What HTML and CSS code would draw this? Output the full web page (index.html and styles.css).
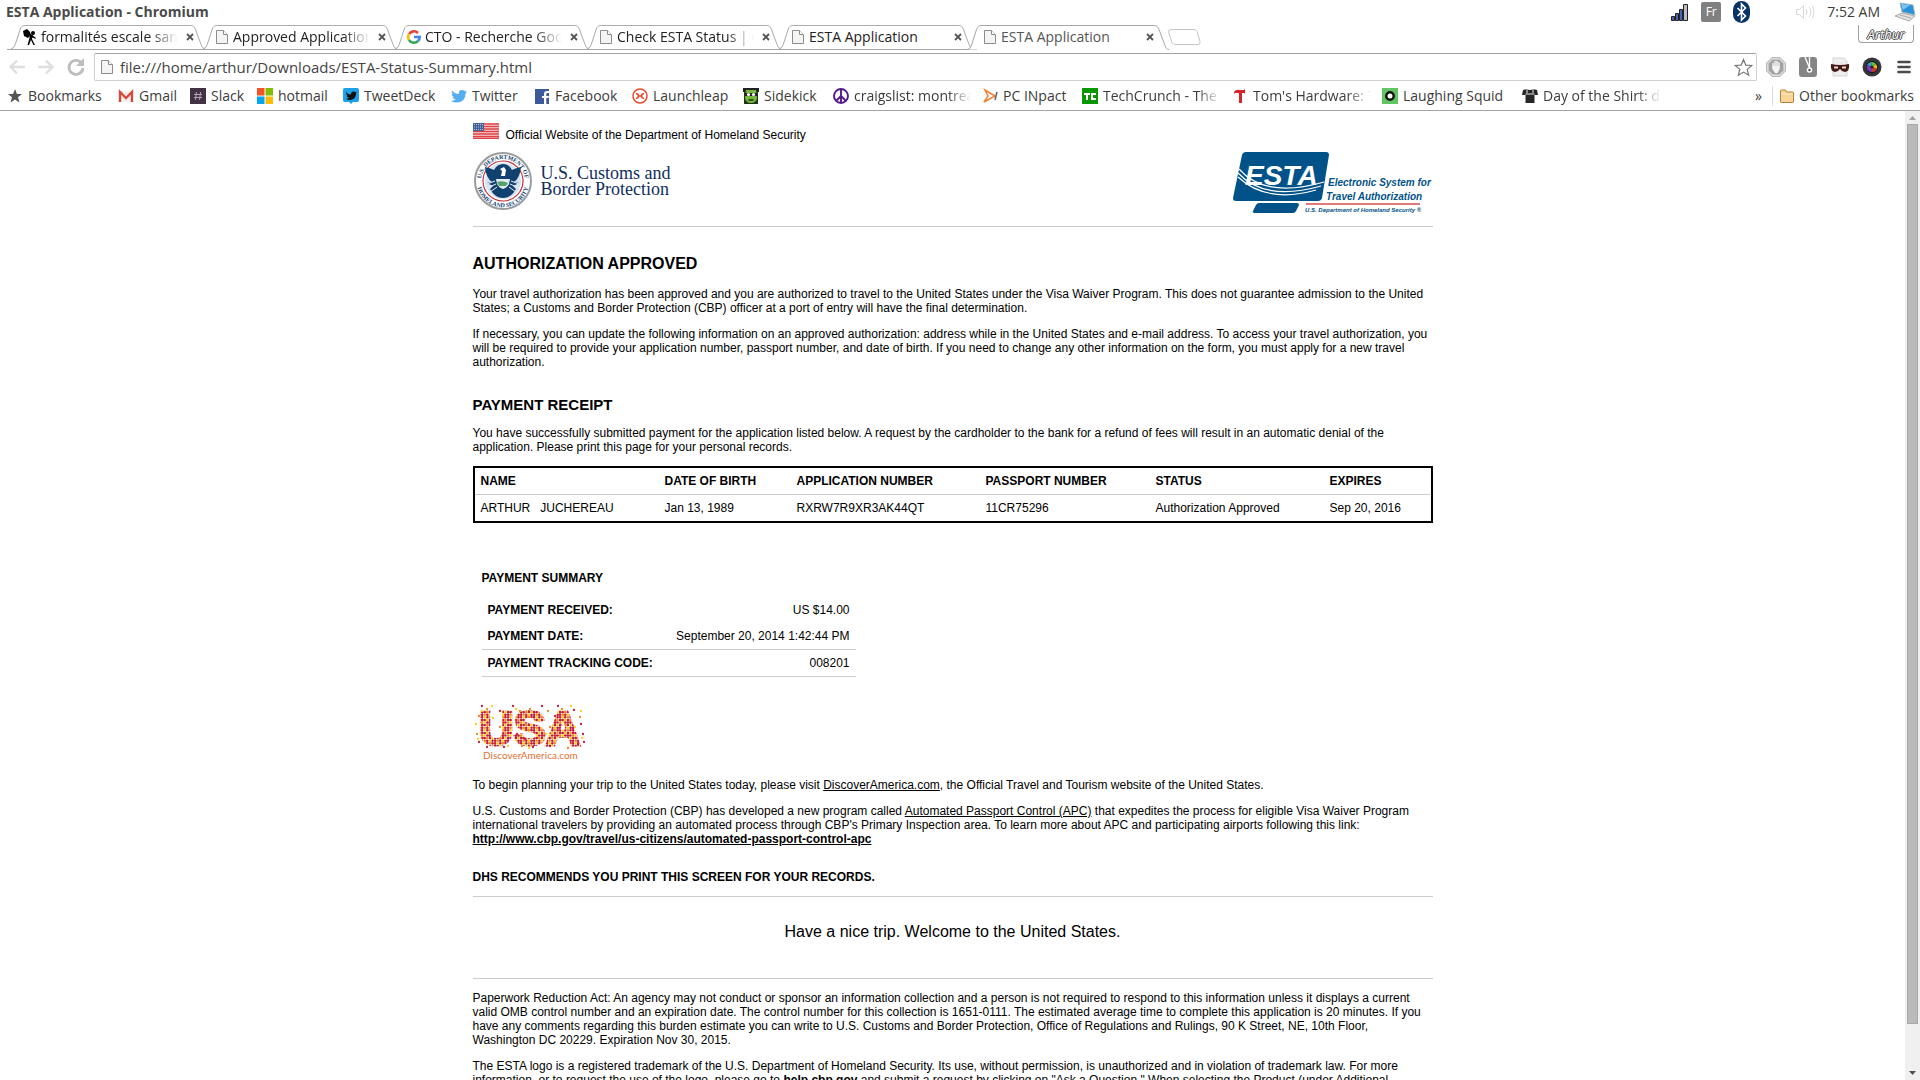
FILE: index.html
```html
<!DOCTYPE html>
<html lang="en">
<head>
<meta charset="utf-8">
<title>ESTA Application - Chromium</title>
<link rel="stylesheet" href="styles.css">
</head>
<body>
<svg class="defs" aria-hidden="true">
  <symbol id="tab-shape" viewBox="0 0 202 25"><path d="M0 24.5C3 24 3.500 22.500 4.500 20L9.500 4.500C10.500 1.500 12 .5 15 .5H187C190 .5 191 2 192 4.500L198 20.500C199 23 199.500 24.500 202 24.500"/></symbol>
  <symbol id="page-icon" viewBox="0 0 16 16"><path d="M2.500 1.500h7l4 4v9h-11z" fill="#f4f4f4" stroke="#8c8c8c"/><path d="M9.500 1.500v4h4" fill="#fff" stroke="#8c8c8c"/></symbol>
  <symbol id="close-icon" viewBox="0 0 8 8"><path d="M1 1l6 6M7 1l-6 6" stroke="#555" stroke-width="1.800"/></symbol>
</svg>
<div class="window">
  <header class="titlebar">
    <span class="window-title">ESTA Application - Chromium</span>
    <div class="tray">
      <svg width="18" height="18" viewBox="0 0 18 18" fill="#4668b0" stroke="#222"><path d="M.5 13.500h3v4h-3z"/><path d="M4.500 10.500h3v7h-3z"/><path d="M8.500 6.500h3v11h-3z"/><path d="M12.500 1.500h4v16h-4z" fill="#b9bdc8"/></svg>
      <span class="keyboard">Fr</span>
      <svg class="bluetooth" width="18" height="22" viewBox="0 0 18 22"><rect x="0" width="17" height="22" rx="8.500" fill="#0b3264"/><path d="M4.500 7l8 8-4 4V3l4 4-8 8" fill="none" stroke="#fff" stroke-width="1.600"/></svg>
      <svg class="volume" width="20" height="18" viewBox="0 0 20 18" fill="none" stroke="#d6d6d6"><path d="M1.500 6.500h3l4-4v13l-4-4h-3z"/><path d="M11 6q2 3 0 6M14 4q4 5 0 10M17 2.500q4 6.500 0 13"/></svg>
      <span class="clock">7:52 AM</span>
      <svg width="22" height="20" viewBox="0 0 22 20"><path d="M6 1l13 2 2 10-13-3z" fill="#2a91d8" stroke="#9fb4c2"/><path d="M7 2l9 1-7 5z" fill="#7cc4f0"/><path d="M8 11l13 3-6 5-14-5z" fill="#e2e2e2" stroke="#aaa"/><path d="M6 13l11 3" stroke="#aaa"/></svg>
    </div>
  </header>

  <div class="tabstrip">
    <div class="tab"><svg class="shape"><use href="#tab-shape"/></svg><svg class="icon" viewBox="0 0 16 16"><circle cx="11" cy="4" r="2"/><path d="M1 2l4-2 3 3 1 3-3 3-4-2z"/><path d="M8 5l3 1-1 4 3 6h-1.500L9 11l-2 5H5.500L7.500 9z"/><path d="M10 6l4 3-.5.8L9 8z"/></svg><button class="tab-title">formalités escale sans</button><button class="close" aria-label="Close tab"><svg><use href="#close-icon"/></svg></button></div>
    <div class="tab"><svg class="shape"><use href="#tab-shape"/></svg><svg class="icon"><use href="#page-icon"/></svg><button class="tab-title">Approved Application</button><button class="close" aria-label="Close tab"><svg><use href="#close-icon"/></svg></button></div>
    <div class="tab"><svg class="shape"><use href="#tab-shape"/></svg><svg class="icon" viewBox="0 0 16 16" fill="none" stroke-width="2.600"><path d="M3.100 5A5.700 5.700 0 0 1 12 4" stroke="#ea4335"/><path d="M3 5a5.700 5.700 0 0 0 0 6" stroke="#fbbc05"/><path d="M3 11a5.700 5.700 0 0 0 9 1" stroke="#34a853"/><path d="M12 12a5.700 5.700 0 0 0 1.700-4H8" stroke="#4285f4"/></svg><button class="tab-title">CTO - Recherche Google</button><button class="close" aria-label="Close tab"><svg><use href="#close-icon"/></svg></button></div>
    <div class="tab"><svg class="shape"><use href="#tab-shape"/></svg><svg class="icon"><use href="#page-icon"/></svg><button class="tab-title">Check ESTA Status | Official</button><button class="close" aria-label="Close tab"><svg><use href="#close-icon"/></svg></button></div>
    <div class="tab"><svg class="shape"><use href="#tab-shape"/></svg><svg class="icon"><use href="#page-icon"/></svg><button class="tab-title">ESTA Application</button><button class="close" aria-label="Close tab"><svg><use href="#close-icon"/></svg></button></div>
    <div class="tab active"><svg class="shape"><use href="#tab-shape"/></svg><svg class="icon"><use href="#page-icon"/></svg><button class="tab-title">ESTA Application</button><button class="close" aria-label="Close tab"><svg><use href="#close-icon"/></svg></button></div>
    <button class="new-tab" aria-label="New tab"><svg width="34" height="18" viewBox="0 0 34 18"><path d="M4 1.500h22q3 0 4 2l3 10q.5 3-2 3H9q-3 0-4-2L1.500 4q0-2.500 2.500-2.500z" fill="#fff" stroke="#c4c4c4"/></svg></button>
    <button class="profile">Arthur</button>
  </div>

  <div class="toolbar">
    <button class="nav" aria-label="Back"><svg width="18" height="18" viewBox="0 0 18 18" fill="none" stroke="#dedede" stroke-width="2.400"><path d="M17 9H3M9 2.500L2.500 9 9 15.500"/></svg></button>
    <button class="nav" aria-label="Forward"><svg width="18" height="18" viewBox="0 0 18 18" fill="none" stroke="#dedede" stroke-width="2.400"><path d="M1 9h14M9 2.500L15.500 9 9 15.500"/></svg></button>
    <button class="nav" aria-label="Reload"><svg width="20" height="20" viewBox="0 0 20 20"><path d="M15.500 6A7 7 0 1 0 17 11" fill="none" stroke="#bdbdbd" stroke-width="2.800"/><path d="M18 1v8h-8z" fill="#bdbdbd"/></svg></button>
    <div class="omnibox">
      <svg class="icon"><use href="#page-icon"/></svg>
      <input type="text" aria-label="Address" value="file:///home/arthur/Downloads/ESTA-Status-Summary.html">
      <button class="star" aria-label="Bookmark this page"><svg width="19" height="19" viewBox="0 0 19 19"><path d="M9.500 1.500l2.300 5.600 6 .4-4.600 3.900 1.500 5.900-5.200-3.200-5.200 3.200 1.500-5.900L1.200 7.500l6-.4z" fill="#fff" stroke="#777" stroke-width="1.200"/></svg></button>
    </div>
    <div class="extensions">
      <button aria-label="Ad blocker"><svg width="20" height="20" viewBox="0 0 20 20"><path d="M6 .5h8L19.500 6v8L14 19.500H6L.5 14V6z" fill="#c8c8c8" stroke="#b8b8b8"/><path d="M6.500 2h7L18 6.500v7L13.500 18h-7L2 13.500v-7z" fill="#a2a2a2" stroke="#eee"/><path d="M7 10V6.500M9 9V4.500M11 9V4.500M13 9.500V6" stroke="#f4f4f4" stroke-width="1.500" stroke-linecap="round"/><path d="M6.300 9h7.400v3l-2 4H9l-2.700-4z" fill="#f4f4f4"/></svg></button>
      <button aria-label="Reader"><svg width="20" height="20" viewBox="0 0 20 20"><rect x="1" y="0" width="18" height="20" rx="3" fill="#858585"/><path d="M7 0l4.500 11M11.500 0v11" stroke="#fff" stroke-width="1.300"/><circle cx="11.500" cy="13" r="2" fill="#555" stroke="#fff" stroke-width="1.500"/></svg></button>
      <button aria-label="Privacy"><svg width="20" height="20" viewBox="0 0 20 20"><path d="M3 1h11l3 3v15H3z" fill="#eee" stroke="#d5d5d5"/><path d="M1 7q9 2 18 0 1 7-4 8-3 0-5-3-2 3-5 3-5-1-4-8z" fill="#431a15"/><path d="M4 10.500h4M12 10.500h4" stroke="#e8d8d0" stroke-width="2"/></svg></button>
      <button aria-label="Camera"><svg width="20" height="20" viewBox="0 0 20 20"><circle cx="10" cy="10" r="9.500" fill="#34353b"/><circle cx="10" cy="10" r="6" fill="#111"/><path d="M10 10L5 8a5.500 5.500 0 0 1 4-3z" fill="#3c9bd8"/><path d="M10 10L9 5a5 5 0 0 1 5 2z" fill="#59bd45"/><path d="M10 10l4-3a5 5 0 0 1 1 5z" fill="#e8bd22"/><path d="M10 10l5 2a5 5 0 0 1-5 3z" fill="#c83a2e"/><path d="M10 10v5a5 5 0 0 1-5-7z" fill="#7c3bb5"/><circle cx="10" cy="10" r="1.500" fill="#222"/></svg></button>
      <button aria-label="Menu"><svg width="14" height="14" viewBox="0 0 14 14" stroke="#4a4a4a" stroke-width="2.600" stroke-linecap="round"><path d="M1.500 2h11M1.500 7h11M1.500 12h11"/></svg></button>
    </div>
  </div>

  <nav class="bookmarks" aria-label="Bookmarks">
    <a href="#"><svg class="icon" viewBox="0 0 16 16"><path d="M8 1l1.900 5H15l-4 3.200 1.500 5.300L8 11.400l-4.500 3.100L5 9.200 1 6h5.100z" fill="#555"/></svg><span>Bookmarks</span></a>
    <a href="#"><svg class="icon" viewBox="0 0 16 16"><path d="M1 3h14v11H1z" fill="#f3f0ef"/><path d="M2 14V4l6 6 6-6v10" fill="none" stroke="#d54b3d" stroke-width="2.400"/></svg><span>Gmail</span></a>
    <a href="#"><svg class="icon" viewBox="0 0 16 16"><path d="M0 0h16v16H0z" fill="#453144"/><path d="M6.500 4L5.500 12M10.500 4l-1 8M4 6.500h8M4 9.500h8" stroke="#b5a5b5" stroke-width="1"/></svg><span>Slack</span></a>
    <a href="#"><svg class="icon" viewBox="0 0 16 16"><path d="M0 0h7.500v7.500H0z" fill="#f35325"/><path d="M8.500 0H16v7.500H8.500z" fill="#81bc06"/><path d="M0 8.500h7.500V16H0z" fill="#05a6f0"/><path d="M8.500 8.500H16V16H8.500z" fill="#ffba08"/></svg><span>hotmail</span></a>
    <a href="#"><svg class="icon" viewBox="0 0 16 16"><path d="M2 0h12q2 0 2 2v10q0 2-2 2h-4l-2 2-2-2H2q-2 0-2-2V2q0-2 2-2z" fill="#1ea0e8"/><path d="M3 4q2 2.500 5 2.500 0-3 2.500-3 1.500 0 2 .7l1.300-.5-.8 1.600q0 6-5.500 6.700-3 0-4.500-1.200 2 0 3-1-2-.5-2.500-2h1Q3 7 3 4z" fill="#111"/></svg><span>TweetDeck</span></a>
    <a href="#"><svg class="icon" viewBox="0 0 16 16"><path d="M1 2.500q3 3.500 6.800 3.500Q7.500 2 11 2q1.500 0 2.500 1l2-.8-1.300 2L16 4l-1.500 1.700Q14.500 14 6 14.500q-3.500 0-6-1.600 3 .1 4.700-1.400-2.300-.2-3-2.200h1.400Q.7 8 .7 5.700l1.400.4Q0 4.500 1 2.500z" fill="#55acee"/></svg><span>Twitter</span></a>
    <a href="#"><svg class="icon" viewBox="0 0 16 16"><path d="M1 1h14v15H1z" fill="#3c5a99"/><path d="M10 16v-6H8V8h2V6q0-3 3-3h2v2h-1.500Q12.300 5 12.300 6.200V8H15l-.4 2h-2.300v6z" fill="#fff"/></svg><span>Facebook</span></a>
    <a href="#"><svg class="icon" viewBox="0 0 16 16" fill="none" stroke="#e8472b" stroke-width="1.500"><circle cx="8" cy="8" r="7"/><path d="M4 5.500Q6.500 6 6.500 8T4 10.500M12 5.500Q9.500 6 9.500 8t2.500 2.500M6.500 8h3"/></svg><span>Launchleap</span></a>
    <a href="#"><svg class="icon" viewBox="0 0 16 16"><path d="M0 0h16v4H0z" fill="#222"/><path d="M1 4h14v12H1z" fill="#22351b"/><path d="M3 2h10l1 8q-1 5-6 5t-6-5z" fill="#76b83c"/><path d="M2 5h12v3H2z" fill="#222"/><circle cx="5.500" cy="6.500" r="1.600" fill="#fff"/><circle cx="10.500" cy="6.500" r="1.600" fill="#fff"/><path d="M5.500 12h5" stroke="#183010" stroke-width="1.500"/></svg><span>Sidekick</span></a>
    <a href="#"><svg class="icon" viewBox="0 0 16 16" fill="none" stroke="#551a8b" stroke-width="1.900"><circle cx="8" cy="8" r="7"/><path d="M8 1v14M8 8l-5 5M8 8l5 5"/></svg><span>craigslist: montreal</span></a>
    <a href="#"><svg class="icon" viewBox="0 0 16 16" fill="none" stroke-width="1.500"><path d="M3 2l10 6-11 6 4-6z" stroke="#ee8233"/><path d="M15 4l-2 8" stroke="#667"/></svg><span>PC INpact</span></a>
    <a href="#"><svg class="icon" viewBox="0 0 16 16"><path d="M0 0h16v16H0z" fill="#0a9600"/><path d="M2 5h6v2H6v5H4V7H2zM9 5h5v2h-3v3h3v2H9z" fill="#fff"/></svg><span>TechCrunch - The latest</span></a>
    <a href="#"><svg class="icon" viewBox="0 0 16 16"><path d="M2 4q2-3 5-2h5l1-1v5l-1-1h-2v10H7V5H5Q3 4 2 6z" fill="#d8232a"/></svg><span>Tom's Hardware: The</span></a>
    <a href="#"><svg class="icon" viewBox="0 0 16 16"><path d="M0 0h16v16H0z" fill="#62c462"/><circle cx="8" cy="8" r="3.700" fill="#fff" stroke="#111" stroke-width="2.400"/></svg><span>Laughing Squid</span></a>
    <a href="#"><svg class="icon" viewBox="0 0 16 16"><path d="M1 2l4-1q3 2 6 0l4 1 1 5h-3l-.5-2v10h-9V5L3 7H0z" fill="#262626"/><path d="M4 6h8M5 1v4M11 1v4" stroke="#eee"/></svg><span>Day of the Shirt: daily</span></a>
    <button class="more" aria-label="More bookmarks">»</button>
    <a class="other" href="#"><svg class="icon" viewBox="0 0 16 16"><path d="M1.500 14V3q0-1 1-1h4l1 2h6q1 0 1 1v9q0 .5-1 .5h-11q-1 0-1-.5z" fill="#f8d596" stroke="#b4803a"/><path d="M2.500 6h11" stroke="#fdebc6"/></svg><span>Other bookmarks</span></a>
  </nav>

  <div class="viewport">
    <main class="page">
      <div class="content">
        <div class="official"><svg width="26" height="16" viewBox="0 0 26 16"><path d="M0 0h26v16H0z" fill="#f7dada"/><path d="M0 1h26M0 3.500h26M0 6h26M0 8.500h26M0 11h26M0 13.500h26M0 15.500h26" stroke="#dd4045" stroke-width="1.400"/><path d="M0 0h11v8H0z" fill="#456096"/><path d="M1 1.500h10M1 4h10M1 6.500h10" stroke="#b7c4dd" stroke-dasharray="1 1"/></svg><span>Official Website of the Department of Homeland Security</span></div>
        <div class="logos">
          <div class="cbp">
            <svg class="seal" width="60" height="58" viewBox="0 1 60 58">
              <defs><path id="arc-top" d="M9.500 38A22 22 0 1 1 50.500 38"/><path id="arc-bottom" d="M4 34A26.300 26.300 0 0 0 56 34"/></defs>
              <circle cx="30" cy="30" r="28" fill="#fff" stroke="#9a9c9f" stroke-width="2"/>
              <circle cx="30" cy="30" r="20" fill="#fff" stroke="#c2323c" stroke-width="1.200"/>
              <circle cx="30" cy="30" r="18" fill="#d7e3ee"/>
              <text class="seal-text"><textPath href="#arc-top" startOffset="50%" text-anchor="middle">U.S. DEPARTMENT OF</textPath></text>
              <text class="seal-text"><textPath href="#arc-bottom" startOffset="50%" text-anchor="middle">HOMELAND SECURITY</textPath></text>
              <path d="M12 16q5 1 9 3 3-6 9-6t9 6q4-2 9-3-1 11-7 15l5 1-6 3 3 3q-5 9-13 9t-13-9l3-3-6-3 5-1q-6-4-7-15z" fill="#12406f"/>
              <path d="M27 18l4-2 2 3-1 6h-4l1-5z" fill="#fff"/>
              <path d="M23 28h14l-1 5q-2 4-6 5-4-1-6-5z" fill="#dfeef4"/><path d="M24 31q6-2 11 1l-2 3h-7z" fill="#5aa06a"/>
              <path d="M14 33l8-3M46 33l-8-3M14 37l9-4M46 37l-9-4M17 41l7-5M43 41l-7-5" stroke="#e7edf3" stroke-width="1"/>
            </svg>
            <div class="agency">U.S. Customs and<br>Border Protection</div>
          </div>
          <svg class="esta" width="200" height="62" viewBox="0 0 200 62" role="img" aria-label="ESTA">
            <path d="M13 0H93q3 0 3 3l-7 43q-1 3-4 3H3q-3 0-3-3L9 3q1-3 4-3z" fill="#005288"/>
            <path d="M26 51h38q2 0 2 2l-3 6q-1 2-3 2H22q-3 0-2-2l3-6q1-2 3-2z" fill="#005288"/>
            <text class="esta-word" x="12" y="33">ESTA</text>
            <path d="M6 17Q32 47 91 30M5 21Q32 50 88 34M5 25Q34 52 83 38" fill="none" stroke="#fff" stroke-width="1.200"/>
            <text class="esta-name" x="95" y="34">Electronic System for</text>
            <text class="esta-name" x="93" y="48">Travel Authorization</text>
            <path d="M73 52h114" stroke="#e07a78" stroke-width="2"/>
            <text class="esta-dept" x="72" y="60">U.S. Department of Homeland Security ®</text>
          </svg>
        </div>

        <h1>AUTHORIZATION APPROVED</h1>
        <p>Your travel authorization has been approved and you are authorized to travel to the United States under the Visa Waiver Program. This does not guarantee admission to the United States; a Customs and Border Protection (CBP) officer at a port of entry will have the final determination.</p>
        <p>If necessary, you can update the following information on an approved authorization: address while in the United States and e-mail address. To access your travel authorization, you will be required to provide your application number, passport number, and date of birth. If you need to change any other information on the form, you must apply for a new travel authorization.</p>

        <h2>PAYMENT RECEIPT</h2>
        <p>You have successfully submitted payment for the application listed below. A request by the cardholder to the bank for a refund of fees will result in an automatic denial of the application. Please print this page for your personal records.</p>
        <table class="receipt">
          <colgroup><col class="c-name"><col class="c-birth"><col class="c-app"><col class="c-pass"><col class="c-status"><col></colgroup>
          <thead><tr><th>NAME</th><th>DATE OF BIRTH</th><th>APPLICATION NUMBER</th><th>PASSPORT NUMBER</th><th>STATUS</th><th>EXPIRES</th></tr></thead>
          <tbody><tr><td>ARTHUR &nbsp; JUCHEREAU</td><td>Jan 13, 1989</td><td>RXRW7R9XR3AK44QT</td><td>11CR75296</td><td>Authorization Approved</td><td>Sep 20, 2016</td></tr></tbody>
        </table>

        <section class="summary">
          <h3>PAYMENT SUMMARY</h3>
          <table>
            <tr><th scope="row">PAYMENT RECEIVED:</th><td>US $14.00</td></tr>
            <tr class="ruled"><th scope="row">PAYMENT DATE:</th><td>September 20, 2014 1:42:44 PM</td></tr>
            <tr class="ruled"><th scope="row">PAYMENT TRACKING CODE:</th><td>008201</td></tr>
          </table>
        </section>

        <svg class="usa" width="114" height="60" viewBox="0 0 114 60" role="img" aria-label="USA DiscoverAmerica.com">
          <defs><pattern id="dots" width="13" height="13" patternUnits="userSpaceOnUse" fill="none" stroke-linecap="round" stroke-width="2.500">
            <path d="M1.300 1.300h0M6.500 1.300h0M3.900 3.900h0M9.100 3.900h0M11.700 3.900h0M1.300 6.500h0M6.500 6.500h0M3.900 9.100h0M11.700 9.100h0M9.100 11.700h0M6.500 11.700h0M9.100 1.300h0M1.300 11.700h0M3.900 6.500h0M9.100 9.100h0" stroke="#c41e3f"/>
            <path d="M3.900 1.300h0M6.500 3.900h0M9.100 6.500h0M1.300 9.100h0M11.700 11.700h0" stroke="#f08a24"/>
            <path d="M11.700 1.300h0M1.300 3.900h0M11.700 6.500h0M6.500 9.100h0M3.900 11.700h0" stroke="#fbd21e"/></pattern></defs>
          <text class="usa-word" x="6" y="42">USA</text>
          <g fill="none" stroke-linecap="round" stroke-width="2.300">
            <path d="M9 3h0M27 8h0M40 3h0M69 3h0M85 3h0M101 7h0M82 13h0M108 21h0M6 39h0M31 44h0M14 44h0M52 36h0M77 43h0M110 31h0M111 39h0M44 31h0M105 42h0M60 44h0" stroke="#c41e3f"/>
            <path d="M14 6h0M6 13h0M47 8h0M57 6h0M75 8h0M89 6h0M107 14h0M27 24h0M4 31h0M77 24h0M49 43h0M95 45h0" stroke="#f08a24"/>
            <path d="M19 3h0M9 8h0M43 6h0M98 3h0M108 8h0M3 21h0M20 15h0M73 31h0M5 36h0M35 43h0M56 45h0M109 35h0M102 24h0" stroke="#fbd21e"/>
          </g>
          <text class="usa-site" x="10" y="56">DiscoverAmerica.com</text>
        </svg>

        <p>To begin planning your trip to the United States today, please visit <a href="#">DiscoverAmerica.com</a>, the Official Travel and Tourism website of the United States.</p>
        <p>U.S. Customs and Border Protection (CBP) has developed a new program called <a href="#">Automated Passport Control (APC)</a> that expedites the process for eligible Visa Waiver Program international travelers by providing an automated process through CBP's Primary Inspection area. To learn more about APC and participating airports following this link: <br><a href="#"><b>http://www.cbp.gov/travel/us-citizens/automated-passport-control-apc</b></a></p>
        <p class="print-note">DHS RECOMMENDS YOU PRINT THIS SCREEN FOR YOUR RECORDS.</p>
        <p class="farewell">Have a nice trip. Welcome to the United States.</p>
        <p>Paperwork Reduction Act: An agency may not conduct or sponsor an information collection and a person is not required to respond to this information unless it displays a current valid OMB control number and an expiration date. The control number for this collection is 1651-0111. The estimated average time to complete this application is 20 minutes. If you have any comments regarding this burden estimate you can write to U.S. Customs and Border Protection, Office of Regulations and Rulings, 90 K Street, NE, 10th Floor, Washington DC 20229. Expiration Nov 30, 2015.</p>
        <p>The ESTA logo is a registered trademark of the U.S. Department of Homeland Security. Its use, without permission, is unauthorized and in violation of trademark law. For more information, or to request the use of the logo, please go to <b>help.cbp.gov</b> and submit a request by clicking on "Ask a Question." When selecting the Product (under Additional</p>
      </div>
    </main>
    <div class="scrollbar" aria-hidden="true">
      <svg width="15" height="13" viewBox="0 0 15 13"><path d="M4 9l3.500-4L11 9z" fill="#a0a0a0"/></svg>
      <div class="track"><div class="thumb"></div></div>
      <svg width="15" height="13" viewBox="0 0 15 13"><path d="M4 4h7L7.500 8z" fill="#505050"/></svg>
    </div>
  </div>
</div>
</body>
</html>
```
FILE: styles.css
```css
* { box-sizing: border-box; }

body {
  margin: 0;
  background: #fff;
  color: #000;
  font: 12px/14px "Liberation Sans", Arial, sans-serif;
}

button {
  display: flex;
  align-items: center;
  justify-content: center;
  padding: 0;
  border: 0;
  background: none;
  color: inherit;
  font: inherit;
}

svg { display: block; flex: none; }
.defs { width: 0; height: 0; position: absolute; }
.icon { width: 16px; height: 16px; }

.window {
  display: flex;
  flex-direction: column;
  height: 100vh;
  overflow: hidden;
}

/* Desktop panel */
.titlebar, .tabstrip, .toolbar, .bookmarks {
  flex: none;
  font-family: "Open Sans", "Noto Sans", sans-serif;
  font-size: 14px;
  line-height: 20px;
  color: #3c3c3c;
}
.titlebar {
  display: flex;
  align-items: center;
  justify-content: space-between;
  height: 24px;
  padding: 0 4px 0 6px;
}
.window-title { font-weight: 700; color: #4a4a4a; }
.tray { display: flex; align-items: center; gap: 12px; }
.keyboard {
  width: 20px;
  border-radius: 2px;
  background: #808080;
  color: #fff;
  font-size: 12px;
  text-align: center;
}
.clock { padding-right: 2px; }
.volume { margin-left: 32px; }

/* Tabs */
.tabstrip {
  display: flex;
  height: 26px;
  padding: 1px 6px 0 7px;
}
.tab {
  position: relative;
  display: flex;
  align-items: center;
  width: 202px;
  height: 25px;
  margin-right: -10px;
  padding: 0 14px 1px 15px;
  color: #222;
}
/* Each tab overlaps the one to its right; the active tab is on top. */
.tab:nth-child(1) { z-index: 5; }
.tab:nth-child(2) { z-index: 4; }
.tab:nth-child(3) { z-index: 3; }
.tab:nth-child(4) { z-index: 2; }
.tab:nth-child(5) { z-index: 1; }
.tab.active { z-index: 6; color: #555; }
.shape {
  position: absolute;
  inset: 0;
  z-index: -1;
  width: 100%;
  height: 100%;
  fill: #fff;
  stroke: #a6a6a6;
}
.tab:not(.active) { padding-bottom: 0; border-bottom: 1px solid #a6a6a6; }
.tab-title {
  flex: 1;
  justify-content: flex-start;
  margin: 0 7px 0 3px;
  overflow: hidden;
  white-space: nowrap;
  mask-image: linear-gradient(to right, #000 80%, transparent);
}
.tab:nth-child(n+5) .tab-title { mask-image: none; }
.close { width: 10px; height: 16px; }
.close svg { width: 8px; height: 8px; }
.new-tab { margin-left: 8px; height: 24px; }
.profile {
  width: 56px;
  height: 18px;
  margin-left: auto;
  border: 1px solid #a0a0a0;
  border-top: 0;
  border-radius: 0 0 4px 4px;
  color: #fff;
  font-size: 13px;
  font-style: italic;
  text-shadow: 1px 0 #444, -1px 0 #444, 0 1px #444, 0 -1px #444;
}

/* Address bar */
.toolbar {
  display: flex;
  align-items: center;
  height: 34px;
  padding: 0 6px 0 8px;
}
.nav { width: 29px; height: 24px; justify-content: flex-start; }
.nav:nth-child(3) { width: 28px; }
.omnibox {
  display: flex;
  align-items: center;
  flex: 1;
  height: 28px;
  padding: 0 3px 0 4px;
  border: 1px solid #cfcfcf;
  border-top-color: #a0a0a0;
  border-radius: 2px;
}
.omnibox input {
  flex: 1;
  min-width: 0;
  margin-left: 5px;
  padding: 0;
  border: 0;
  outline: 0;
  background: none;
  color: #444;
  font: 15px/24px "Open Sans", "Noto Sans", sans-serif;
}
.extensions { display: flex; align-items: center; gap: 12px; padding-left: 9px; }
.extensions button:last-child { width: 20px; }

/* Bookmark bar */
.bookmarks {
  display: grid;
  grid-template-columns: 111px 72px 67px 86px 108px 83px 98px 111px 90px 149px 100px 150px 150px 140px 150px 1fr auto;
  align-items: center;
  height: 27px;
  padding: 0 6px 2px 7px;
  border-bottom: 1px solid #a4a4a4;
}
.bookmarks a {
  display: flex;
  align-items: center;
  gap: 5px;
  padding-right: 11px;
  color: inherit;
  text-decoration: none;
  white-space: nowrap;
}
.bookmarks span { overflow: hidden; }
.bookmarks a:nth-child(10) span,
.bookmarks a:nth-child(12) span,
.bookmarks a:nth-child(13) span,
.bookmarks a:nth-child(15) span { mask-image: linear-gradient(to right, #000 80%, transparent); }
.more { justify-content: flex-end; padding-right: 10px; }
.bookmarks .other { gap: 4px; padding: 0 0 0 6px; border-left: 1px solid #ddd; }

/* Page area */
.viewport { display: flex; flex: 1; min-height: 0; }
.page { flex: 1; overflow: hidden; }
.content { max-width: 960px; margin: 0 auto; padding-top: 12px; }
.scrollbar {
  display: flex;
  flex-direction: column;
  width: 15px;
  background: #f0f0f0;
}
.track { flex: 1; padding: 0 2px 43px; }
.thumb { height: 100%; border: 1px solid #a8a8a8; background: #bababa; }

.official { display: flex; align-items: baseline; gap: 7px; }
.logos {
  display: flex;
  justify-content: space-between;
  margin-top: 10px;
  padding-bottom: 12px;
  border-bottom: 1px solid #ccc;
}
.cbp { display: flex; align-items: flex-start; gap: 8px; }
.agency {
  padding-top: 13px;
  color: #0f2f5e;
  font: 18px/16px "Liberation Serif", serif;
}
.seal-text { fill: #12406f; font: bold 6px "Liberation Serif", serif; }
.esta-word { fill: #fff; font: italic bold 28px "Liberation Sans", sans-serif; }
.esta-name { fill: #005288; font: italic bold 10px "Liberation Sans", sans-serif; }
.esta-dept { fill: #005288; font: italic bold 6px "Liberation Sans", sans-serif; }

h1, h2 { font-size: 16px; line-height: 18px; }
h1 { margin: 28px 0 14px; }
h2 { margin: 27px 0 12px; font-size: 15px; }
p { margin: 0 0 12px; }
.content a { color: inherit; }

table { border-collapse: collapse; }
th, td { padding: 6px; text-align: left; }
.receipt {
  width: 100%;
  border: 2px solid #000;
  border-collapse: separate;
  border-spacing: 0;
  table-layout: fixed;
}
.receipt thead th { border-bottom: 1px solid #ccc; }
.c-name { width: 184px; }
.c-birth { width: 132px; }
.c-app { width: 189px; }
.c-pass { width: 170px; }
.c-status { width: 174px; }

.summary { width: 374px; margin: 48px 0 26px 9px; }
.summary h3 { margin: 0 0 12px; font-size: 12px; }
.summary table { width: 100%; border-collapse: separate; border-spacing: 0; }
.summary td { text-align: right; }
.ruled th, .ruled td { border-bottom: 1px solid #ccc; }

.usa { margin-bottom: 15px; }
.usa-word {
  fill: url(#dots);
  stroke: url(#dots);
  stroke-width: 3px;
  font: bold 48px "Liberation Sans", sans-serif;
}
.usa-site { fill: #df6f33; font: 10px Lato, sans-serif; }

.print-note { margin: 24px 0 0; padding-bottom: 12px; border-bottom: 1px solid #ccc; font-weight: 700; }
.farewell {
  padding: 26px 0 37px;
  border-bottom: 1px solid #ccc;
  font-size: 16px;
  line-height: 18px;
  text-align: center;
}
```
